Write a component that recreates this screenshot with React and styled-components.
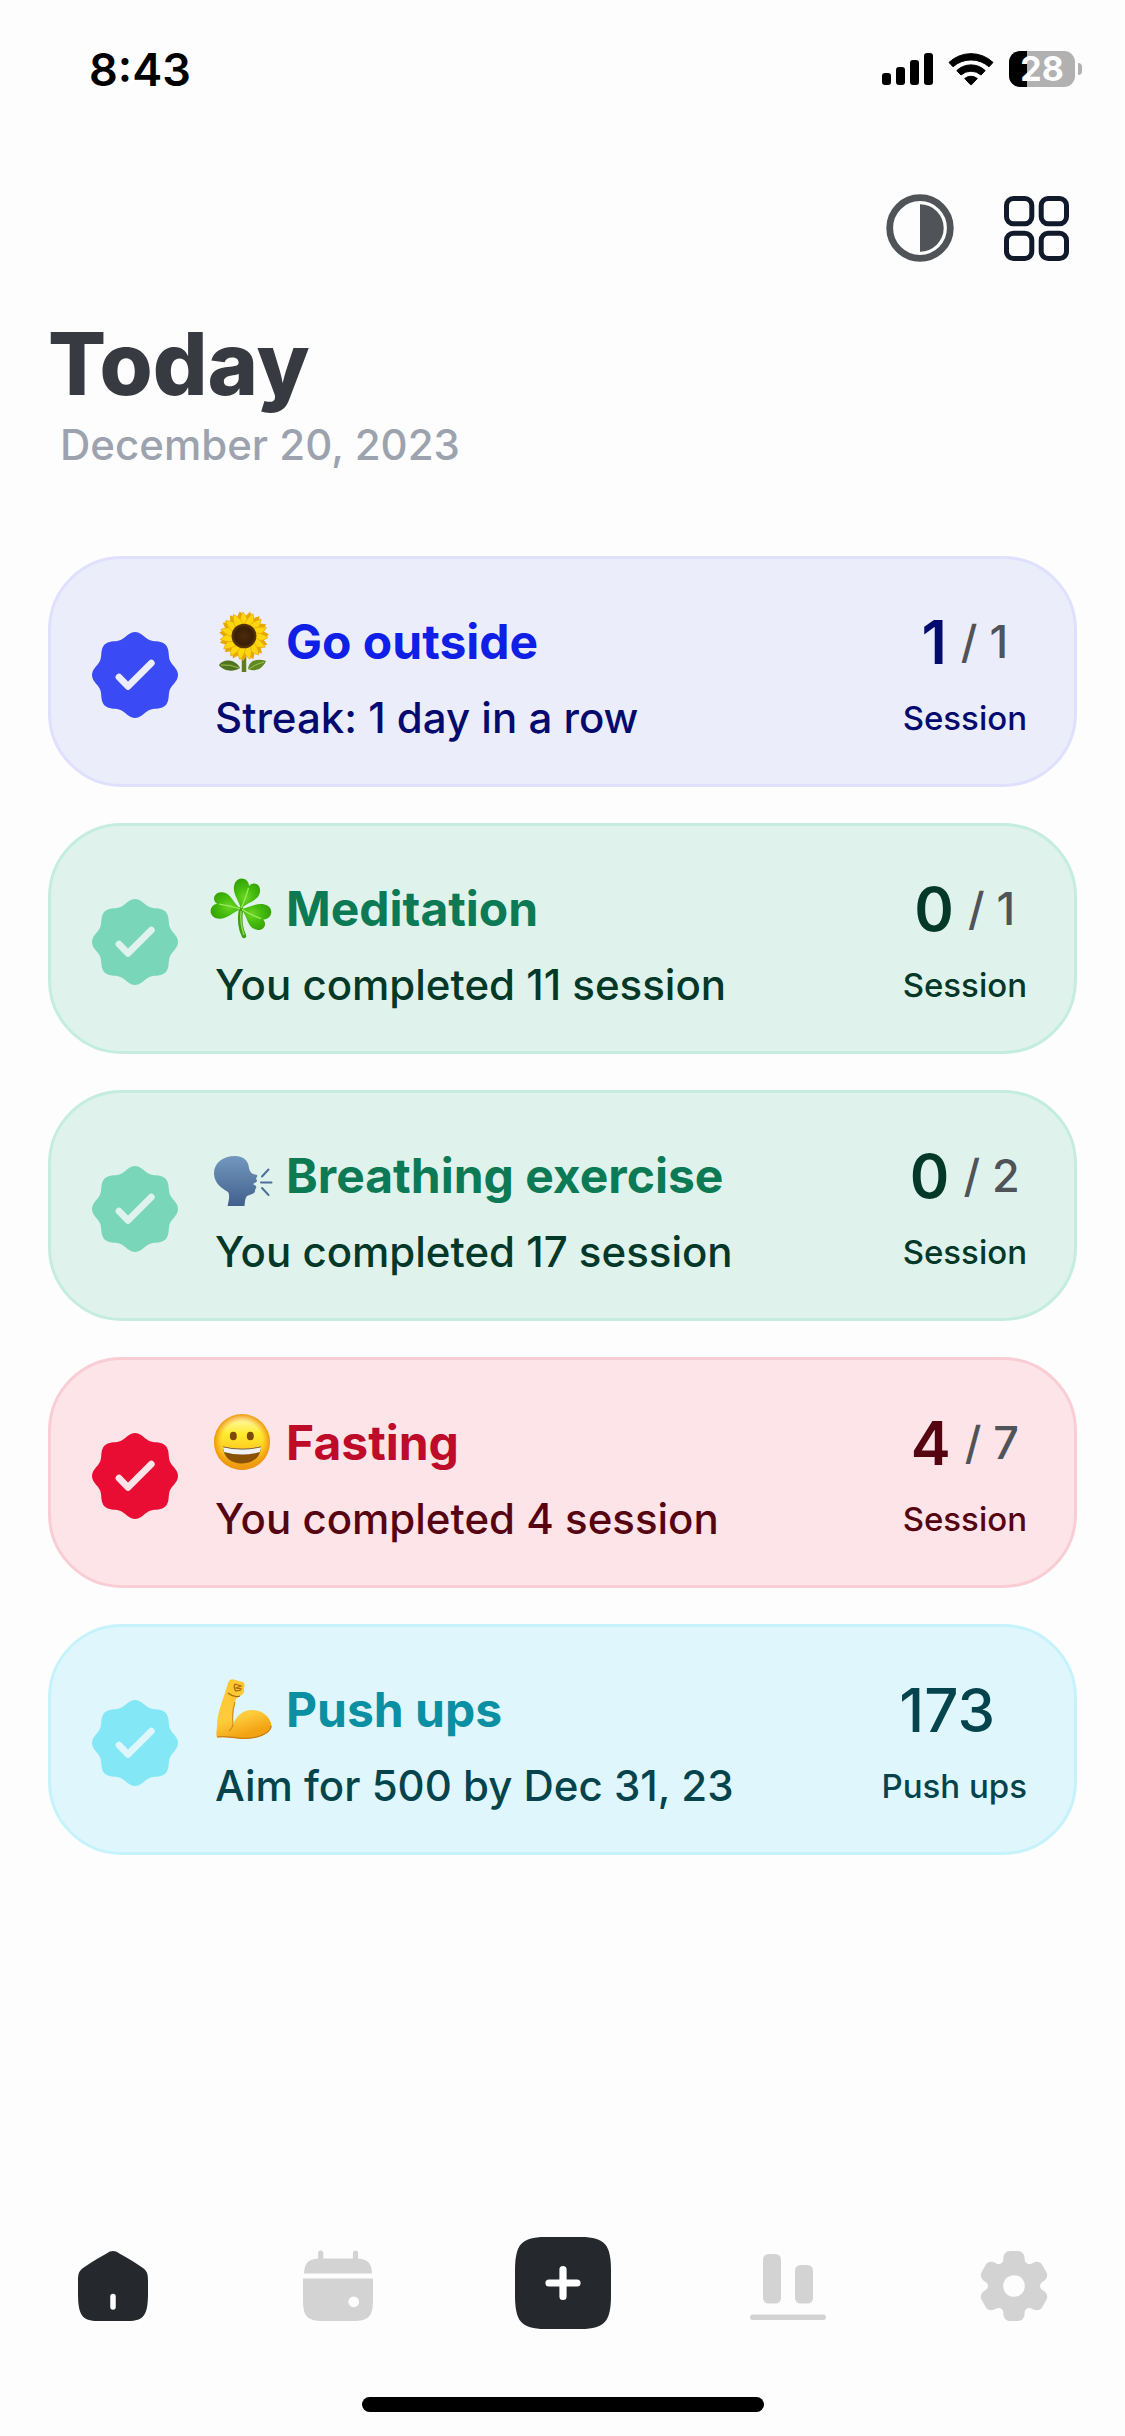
import React from "react";
import styled, { createGlobalStyle } from "styled-components";

const GlobalStyle = createGlobalStyle`
  * {
    box-sizing: border-box;
  }
  body {
    margin: 0;
    background: #fdfdfd;
    font-family: Inter, "Liberation Sans", sans-serif;
  }
  h1, h2, p, ul {
    margin: 0;
    padding: 0;
  }
  svg {
    display: block;
    overflow: visible;
  }
`;

const Page = styled.div`
  min-height: 100vh;
  display: flex;
  flex-direction: column;
`;

const StatusBar = styled.div`
  height: 138px;
  padding: 0 43px 0 89px;
  display: flex;
  align-items: center;
  justify-content: space-between;
`;

const Time = styled.div`
  font-size: 45px;
  font-weight: 600;
  color: #000;
`;

const StatusIcons = styled.div`
  display: flex;
  align-items: center;
  gap: 15px;
`;

const Battery = styled.div`
  display: flex;
  align-items: center;
  gap: 3px;
`;

const BatteryBody = styled.div`
  width: 66px;
  height: 36px;
  border-radius: 11px;
  background: linear-gradient(to right, #000 28%, #b1b1b1 28%);
  color: #fff;
  font-size: 34px;
  line-height: 36px;
  font-weight: 700;
  text-align: center;
`;

const BatteryTip = styled.div`
  width: 4px;
  height: 12px;
  border-radius: 0 6px 6px 0;
  background: #b1b1b1;
`;

const Toolbar = styled.div`
  padding: 56px 56px 0;
  display: flex;
  align-items: center;
  justify-content: flex-end;
  gap: 50px;
`;

const IconButton = styled.button`
  padding: 0;
  border: 0;
  background: none;
  cursor: pointer;
`;

const Header = styled.header`
  padding: 54px 48px 84px;
`;

const Title = styled.h1`
  font-size: 86px;
  line-height: 96px;
  font-weight: 800;
  color: #373a40;
`;

const DateText = styled.p`
  margin-top: 5px;
  margin-bottom: -1px;
  padding-left: 12px;
  font-size: 42px;
  line-height: 56px;
  font-weight: 500;
  color: #9ca3af;
`;

const HabitList = styled.ul`
  flex: 1;
  padding: 0 48px;
  display: flex;
  flex-direction: column;
  gap: 36px;
  list-style: none;
`;

const Card = styled.li`
  display: flex;
  align-items: center;
  gap: 34px;
  padding: 45px 47px 38px 41px;
  border: 3px solid ${(props) => props.$theme.border};
  border-radius: 74px;
  background: ${(props) => props.$theme.background};
`;

const Details = styled.div`
  flex: 1;
  min-width: 0;
`;

const HabitName = styled.h2`
  display: flex;
  align-items: center;
  gap: 14px;
  font-size: 48px;
  line-height: 76px;
  font-weight: 700;
  color: ${(props) => props.$color};
`;

const Caption = styled.p`
  margin-top: 10px;
  padding-left: 3px;
  font-size: 42px;
  line-height: 56px;
  font-weight: 500;
  color: ${(props) => props.$color};
`;

const Progress = styled.div`
  display: flex;
  flex-direction: column;
  align-items: center;
  white-space: nowrap;
  color: ${(props) => props.$color};
`;

const Count = styled.div`
  height: 76px;
  display: flex;
  align-items: center;
  gap: 14px;
  font-size: 60px;
  line-height: 76px;
  font-weight: ${(props) => (props.$plain ? 500 : 600)};
  padding-right: ${(props) => (props.$plain ? "14px" : "0")};
`;

const Goal = styled.span`
  font-size: 45px;
  font-weight: 500;
  color: #505358;
`;

const Unit = styled.div`
  margin-top: 10px;
  font-size: 33px;
  line-height: 56px;
  font-weight: 500;
`;

const TabBar = styled.nav`
  display: grid;
  grid-template-columns: repeat(5, 1fr);
  align-items: center;
  justify-items: center;
  padding-bottom: 68px;
`;

// the plain tabs hang slightly lower than the big add tile
const TabButton = styled(IconButton)`
  padding-top: ${(props) => (props.$tile ? "0" : "6px")};
`;

const HomeIndicator = styled.div`
  width: 402px;
  height: 15px;
  margin: 0 auto 24px;
  border-radius: 8px;
  background: #000;
`;

const themes = {
  blue: {
    background: "#ecedfb",
    border: "#dfe0fd",
    badge: "#3a4af5",
    title: "#0f1fe6",
    text: "#050b6e",
  },
  green: {
    background: "#dff3ec",
    border: "#c5eddf",
    badge: "#79d6b9",
    title: "#0c7a54",
    text: "#043828",
  },
  red: {
    background: "#fce4e8",
    border: "#facdd5",
    badge: "#e90d33",
    title: "#bd0b29",
    text: "#570412",
  },
  cyan: {
    background: "#dff7fc",
    border: "#c6f3fb",
    badge: "#83e7f5",
    title: "#0b8fa3",
    text: "#05444d",
  },
};

// wavy seal with eight lobes, centred in an 86 x 86 box
const sealPath = (() => {
  const points = [];
  for (let i = 0; i < 144; i++) {
    const a = (i / 144) * Math.PI * 2;
    const r = 40.4 + 2.6 * Math.cos(8 * a);
    points.push(`${(43 + r * Math.cos(a)).toFixed(2)} ${(43 + r * Math.sin(a)).toFixed(2)}`);
  }
  return `M${points.join("L")}Z`;
})();

// one tooth of the gear, turned six times around the origin
const gearPath = (() => {
  const turn = (x, y, k) => {
    const a = (k * Math.PI) / 3;
    const c = Math.cos(a);
    const s = Math.sin(a);
    return `${(x * c - y * s).toFixed(2)} ${(x * s + y * c).toFixed(2)}`;
  };
  let d = `M${turn(-10.7, -26.7, 0)}`;
  for (let k = 0; k < 6; k++) {
    const p = (x, y) => turn(x, y, k);
    d += `C${p(-10.7, -32)} ${p(-8, -35)} ${p(-4, -35)}L${p(4, -35)}`;
    d += `C${p(8, -35)} ${p(10.7, -32)} ${p(10.7, -26.7)}`;
    d += `C${p(10.7, -23)} ${p(14.5, -20.7)} ${p(17.8, -22.6)}`;
  }
  return `${d}Z`;
})();

const SignalIcon = () => (
  <svg width="51" height="32" viewBox="0 0 51 32">
    <rect x="0" y="20" width="9" height="12" rx="3" />
    <rect x="14" y="14" width="9" height="18" rx="3" />
    <rect x="28" y="7" width="9" height="25" rx="3" />
    <rect x="42" y="0" width="9" height="32" rx="3" />
  </svg>
);

const WifiIcon = () => (
  <svg width="46" height="34" viewBox="0 0 46 34" stroke="#000" strokeWidth="1" strokeLinejoin="round">
    <path d="M1 10.4 A32 32 0 0 1 45 10.4 L41 14.8 A27 27 0 0 0 5 14.8 Z" />
    <path d="M8.8 18.6 A20.5 20.5 0 0 1 37.2 18.6 L33 23 A15 15 0 0 0 13 23 Z" />
    <path d="M16.7 26.5 A10 10 0 0 1 29.3 26.5 L23.6 32.6 Q23 33 22.4 32.6 Z" />
  </svg>
);

const ContrastIcon = () => (
  <svg width="68" height="68" viewBox="0 0 68 68">
    <circle cx="34" cy="34" r="30.3" fill="none" stroke="#505358" strokeWidth="6.8" />
    <path d="M34 10.3 A23.7 23.7 0 0 1 34 57.7 Z" fill="#505358" />
  </svg>
);

const GridIcon = () => (
  <svg width="65" height="65" viewBox="0 0 65 65" fill="none" stroke="#111a2b" strokeWidth="5">
    <rect x="2.5" y="2.5" width="25.3" height="25.3" rx="7" />
    <rect x="37.2" y="2.5" width="25.3" height="25.3" rx="7" />
    <rect x="2.5" y="37.2" width="25.3" height="25.3" rx="7" />
    <rect x="37.2" y="37.2" width="25.3" height="25.3" rx="7" />
  </svg>
);

const SealIcon = ({ color, check }) => (
  <svg width="86" height="86" viewBox="0 0 86 86">
    <path d={sealPath} fill={color} />
    <path
      d="M27 45.2 L36 54.3 L59.3 31.2"
      fill="none"
      stroke={check}
      strokeWidth="6.8"
      strokeLinecap="round"
      strokeLinejoin="round"
    />
  </svg>
);

const petalAngles = [0, 24, 48, 72, 96, 120, 144, 168, 192, 216, 240, 264, 288, 312, 336];

const Sunflower = () => (
  <svg width="60" height="60" viewBox="0 0 60 60" role="img" aria-label="Sunflower">
    <defs>
      <radialGradient id="disc">
        <stop offset="0" stopColor="#4a2c0c" />
        <stop offset="0.7" stopColor="#3a1f06" />
        <stop offset="1" stopColor="#5d3a08" />
      </radialGradient>
    </defs>
    <path d="M32 42 V60" stroke="#5f7d1c" strokeWidth="4.5" />
    <path d="M7 53 C11 46 24 47 28 56 C22 60 12 60 7 53 Z" fill="#4f7420" />
    <path d="M54 49 C46 46 37 48 36 57 C42 60 50 58 54 49 Z" fill="#628a22" />
    <path d="M9 53 Q18 52 27 56 M52 50 Q43 52 37 57" stroke="#a3bd4c" strokeWidth="1" fill="none" />
    {petalAngles.map((a) => (
      <path
        key={a}
        d="M32 24 C25 14 27 6 33 -1 C38 6 39 14 32 24 Z"
        fill="#e9a800"
        transform={`rotate(${a + 12} 32 24)`}
      />
    ))}
    {petalAngles.map((a) => (
      <path
        key={a}
        d="M32 24 C26 14 27 7 31 0 C37 7 38 14 32 24 Z"
        fill="#fdd60c"
        stroke="#e0a106"
        strokeWidth="0.6"
        transform={`rotate(${a} 32 24)`}
      />
    ))}
    <ellipse cx="32" cy="24" rx="12.5" ry="12.3" fill="url(#disc)" />
  </svg>
);

const leafPath = "M0 0 C-3 -7 -13 -13 -11 -23 C-9 -30 0 -30 2 -23 C5 -29 13 -27 13 -19 C13 -11 4 -8 0 0 Z";

const Shamrock = () => (
  <svg width="60" height="60" viewBox="0 0 60 60" role="img" aria-label="Shamrock">
    <defs>
      <radialGradient id="leaf" cx="0.5" cy="0.6" r="0.65">
        <stop offset="0" stopColor="#6fd626" />
        <stop offset="0.5" stopColor="#45bd0d" />
        <stop offset="1" stopColor="#35a207" />
      </radialGradient>
    </defs>
    <path d="M29 30 C27 42 29 51 32 57" fill="none" stroke="#3f9e14" strokeWidth="4.5" strokeLinecap="round" />
    <path d="M29 32 C28 42 30 50 32 56" fill="none" stroke="#8cdb4c" strokeWidth="1.5" />
    {[14, -83, 110].map((angle) => (
      <g key={angle} transform={`translate(29 30) rotate(${angle}) scale(1.1 1.06)`}>
        <path d={leafPath} fill="url(#leaf)" />
        <path d="M0 -1 Q2 -10 2 -21" stroke="#9be85c" strokeWidth="1.2" fill="none" />
      </g>
    ))}
  </svg>
);

const SpeakingHead = () => (
  <svg width="60" height="60" viewBox="0 0 60 60" role="img" aria-label="Speaking head">
    <defs>
      <linearGradient id="head" x1="0" y1="0" x2="0" y2="1">
        <stop offset="0" stopColor="#7398bf" />
        <stop offset="1" stopColor="#41608c" />
      </linearGradient>
    </defs>
    <path
      d="M23 10 C32 10 36.5 15 37 22 C37.5 25 39 27 41 28 L45 29 C46 30 44 32 44 33 C45 34 46 35 43.5 36.5 L41 38 L44 40 C45 42 43 43 43 45 C43 48 38 48.5 35 50 C33 52 33 56 32.5 60 H15.5 C17 54 18 49 16 46 C7 41 2 35 2 27 C2 17 11 10 23 10 Z"
      fill="url(#head)"
    />
    <path
      d="M50 30.5 L56.5 23.5 M49 36.5 H59.5 M50 42 L56.5 49"
      stroke="#4e6e9e"
      strokeWidth="2"
      strokeLinecap="round"
    />
  </svg>
);

const Grin = () => (
  <svg width="60" height="60" viewBox="0 0 60 60" role="img" aria-label="Grinning face">
    <defs>
      <linearGradient id="face" x1="0" y1="0" x2="0" y2="1">
        <stop offset="0" stopColor="#fffbd0" />
        <stop offset="0.35" stopColor="#ffec2f" />
        <stop offset="0.7" stopColor="#fdc51c" />
        <stop offset="1" stopColor="#e58a09" />
      </linearGradient>
      <radialGradient id="rim">
        <stop offset="0.72" stopColor="#f5a414" stopOpacity="0" />
        <stop offset="1" stopColor="#ee960f" stopOpacity="1" />
      </radialGradient>
      <clipPath id="mouth">
        <path d="M11 33.5 Q30 38 49 33.5 C49 44 41 50.5 30 50.5 C19 50.5 11 44 11 33.5 Z" />
      </clipPath>
    </defs>
    <circle cx="30" cy="29" r="28" fill="url(#face)" />
    <circle cx="30" cy="29" r="28" fill="url(#rim)" />
    <ellipse cx="21.3" cy="23" rx="3.5" ry="4.3" fill="#7d4a08" />
    <ellipse cx="38.3" cy="23" rx="3.5" ry="4.3" fill="#7d4a08" />
    <g clipPath="url(#mouth)">
      <rect x="10" y="32" width="40" height="20" fill="#8a5207" />
      <path d="M10 32 H50 L48 39 Q30 44 12 39 Z" fill="#eff3f5" />
      <path d="M11 33.5 Q30 38 49 33.5" fill="none" stroke="#6e4207" strokeWidth="1.5" />
    </g>
  </svg>
);

const Biceps = () => (
  <svg width="60" height="60" viewBox="0 0 60 60" role="img" aria-label="Flexed biceps">
    <defs>
      <linearGradient id="arm" x1="0" y1="0" x2="0.3" y2="1">
        <stop offset="0" stopColor="#fcc62f" />
        <stop offset="0.7" stopColor="#fecb3c" />
        <stop offset="1" stopColor="#f2a312" />
      </linearGradient>
    </defs>
    <path
      d="M16 3 C17 0 20 -2 23 0 L31 2 C34 4 32 7 32 9 C33 12 31 15 28 16 C25 17 24 19 23 22 C21 29 20 37 21 45 C24 36 31 30 40 30 C51 30 59 38 59.5 46 C59 54 45 59 29 58.5 C21 58 13 56 5 57.5 C3.5 54 5 50 5 46 C5 35 9 25 13 13 Z"
      fill="url(#arm)"
    />
    <path d="M5 57 C13 55.5 21 58 29 58.3 C45 59 58 54 59.3 46" fill="none" stroke="#c97d12" strokeWidth="1.2" />
    <path d="M23 22 C21 29 20 37 21 45 C20 49 18 50 17 51" fill="none" stroke="#d48c14" strokeWidth="1.2" />
    <path
      d="M23 4 L29 6 L24 8 L30 9 M23 4 Q21 8 24 11 L29 10 M16 13 Q22 18 28 16"
      fill="none"
      stroke="#a8660b"
      strokeWidth="1.2"
    />
  </svg>
);

const HomeIcon = () => (
  <svg width="70" height="70" viewBox="0 0 70 70">
    <path
      d="M29 2.3 C33 -0.8 37 -0.8 41 2.3 C48 6 55 10.5 62 15 C68.5 19 70 21 70 30 V42 C70 64 66 70 50 70 H20 C4 70 0 64 0 42 V30 C0 21 1.5 19 8 15 C15 10.5 22 6 29 2.3 Z"
      fill="#25282d"
    />
    <path d="M35 45.5 V56" stroke="#fdfdfd" strokeWidth="5.5" strokeLinecap="round" />
  </svg>
);

const CalendarIcon = () => (
  <svg width="70" height="70" viewBox="0 0 70 70" fill="#d3d3d3">
    <path d="M17.7 2 V10 M52.5 2 V10" stroke="#d3d3d3" strokeWidth="5.2" strokeLinecap="round" />
    <path d="M1 22.5 C1.5 11 6 7.5 18 7.5 H52 C64 7.5 68.5 11 69 22.5 Z" />
    <path
      fillRule="evenodd"
      d="M0 27.5 H70 V49 C70 65 66 70 50 70 H20 C4 70 0 65 0 49 Z M50.7 45.5 a5.4 5.4 0 1 0 0.01 0 Z"
    />
  </svg>
);

const AddIcon = () => (
  <svg width="96" height="92" viewBox="0 0 96 92">
    <path
      d="M30 0 H66 C90 0 96 8 96 34 V58 C96 84 90 92 66 92 H30 C6 92 0 84 0 58 V34 C0 8 6 0 30 0 Z"
      fill="#25282d"
    />
    <path d="M48 32.5 V59.5 M34 46 H62" stroke="#fff" strokeWidth="7.2" strokeLinecap="round" />
  </svg>
);

const StatsIcon = () => (
  <svg width="76" height="70" viewBox="0 -3 76 70" fill="#d3d3d3">
    <rect x="13" y="0" width="18" height="49.5" rx="5.5" />
    <rect x="45" y="11" width="18" height="38.5" rx="5.5" />
    <rect x="0" y="60.5" width="76" height="5.5" rx="2.7" />
  </svg>
);

const SettingsIcon = () => (
  <svg width="70" height="70" viewBox="-36 -35 70 70">
    <path d={gearPath} fill="#d3d3d3" />
    <circle r="10.8" fill="#fdfdfd" />
  </svg>
);

const habits = [
  { name: "Go outside", emoji: Sunflower, caption: "Streak: 1 day in a row", count: 1, goal: 1, unit: "Session", theme: themes.blue, done: true },
  { name: "Meditation", emoji: Shamrock, caption: "You completed 11 session", count: 0, goal: 1, unit: "Session", theme: themes.green },
  { name: "Breathing exercise", emoji: SpeakingHead, caption: "You completed 17 session", count: 0, goal: 2, unit: "Session", theme: themes.green },
  { name: "Fasting", emoji: Grin, caption: "You completed 4 session", count: 4, goal: 7, unit: "Session", theme: themes.red, done: true },
  { name: "Push ups", emoji: Biceps, caption: "Aim for 500 by Dec 31, 23", count: 173, unit: "Push ups", theme: themes.cyan },
];

const tabs = [
  { label: "Home", icon: HomeIcon },
  { label: "Calendar", icon: CalendarIcon },
  { label: "Add habit", icon: AddIcon, tile: true },
  { label: "Statistics", icon: StatsIcon },
  { label: "Settings", icon: SettingsIcon },
];

const Habit = ({ habit }) => {
  const Emoji = habit.emoji;
  const { theme } = habit;
  return (
    <Card $theme={theme}>
      <IconButton aria-label={`Complete ${habit.name}`} aria-pressed={!!habit.done}>
        <SealIcon color={theme.badge} check={theme.background} />
      </IconButton>
      <Details>
        <HabitName $color={theme.title}>
          <Emoji />
          {habit.name}
        </HabitName>
        <Caption $color={theme.text}>{habit.caption}</Caption>
      </Details>
      <Progress $color={theme.text}>
        <Count $plain={!habit.goal}>
          {habit.count}
          {habit.goal && <Goal>/ {habit.goal}</Goal>}
        </Count>
        <Unit>{habit.unit}</Unit>
      </Progress>
    </Card>
  );
};

const App = () => {
  return (
    <Page>
      <GlobalStyle />
      <StatusBar>
        <Time>8:43</Time>
        <StatusIcons>
          <SignalIcon />
          <WifiIcon />
          <Battery>
            <BatteryBody>28</BatteryBody>
            <BatteryTip />
          </Battery>
        </StatusIcons>
      </StatusBar>
      <Toolbar>
        <IconButton aria-label="Toggle theme">
          <ContrastIcon />
        </IconButton>
        <IconButton aria-label="Change layout">
          <GridIcon />
        </IconButton>
      </Toolbar>
      <Header>
        <Title>Today</Title>
        <DateText>December 20, 2023</DateText>
      </Header>
      <HabitList>
        {habits.map((habit) => (
          <Habit key={habit.name} habit={habit} />
        ))}
      </HabitList>
      <TabBar>
        {tabs.map(({ label, icon: Icon, tile }) => (
          <TabButton key={label} aria-label={label} $tile={tile}>
            <Icon />
          </TabButton>
        ))}
      </TabBar>
      <HomeIndicator />
    </Page>
  );
};

export default App;
